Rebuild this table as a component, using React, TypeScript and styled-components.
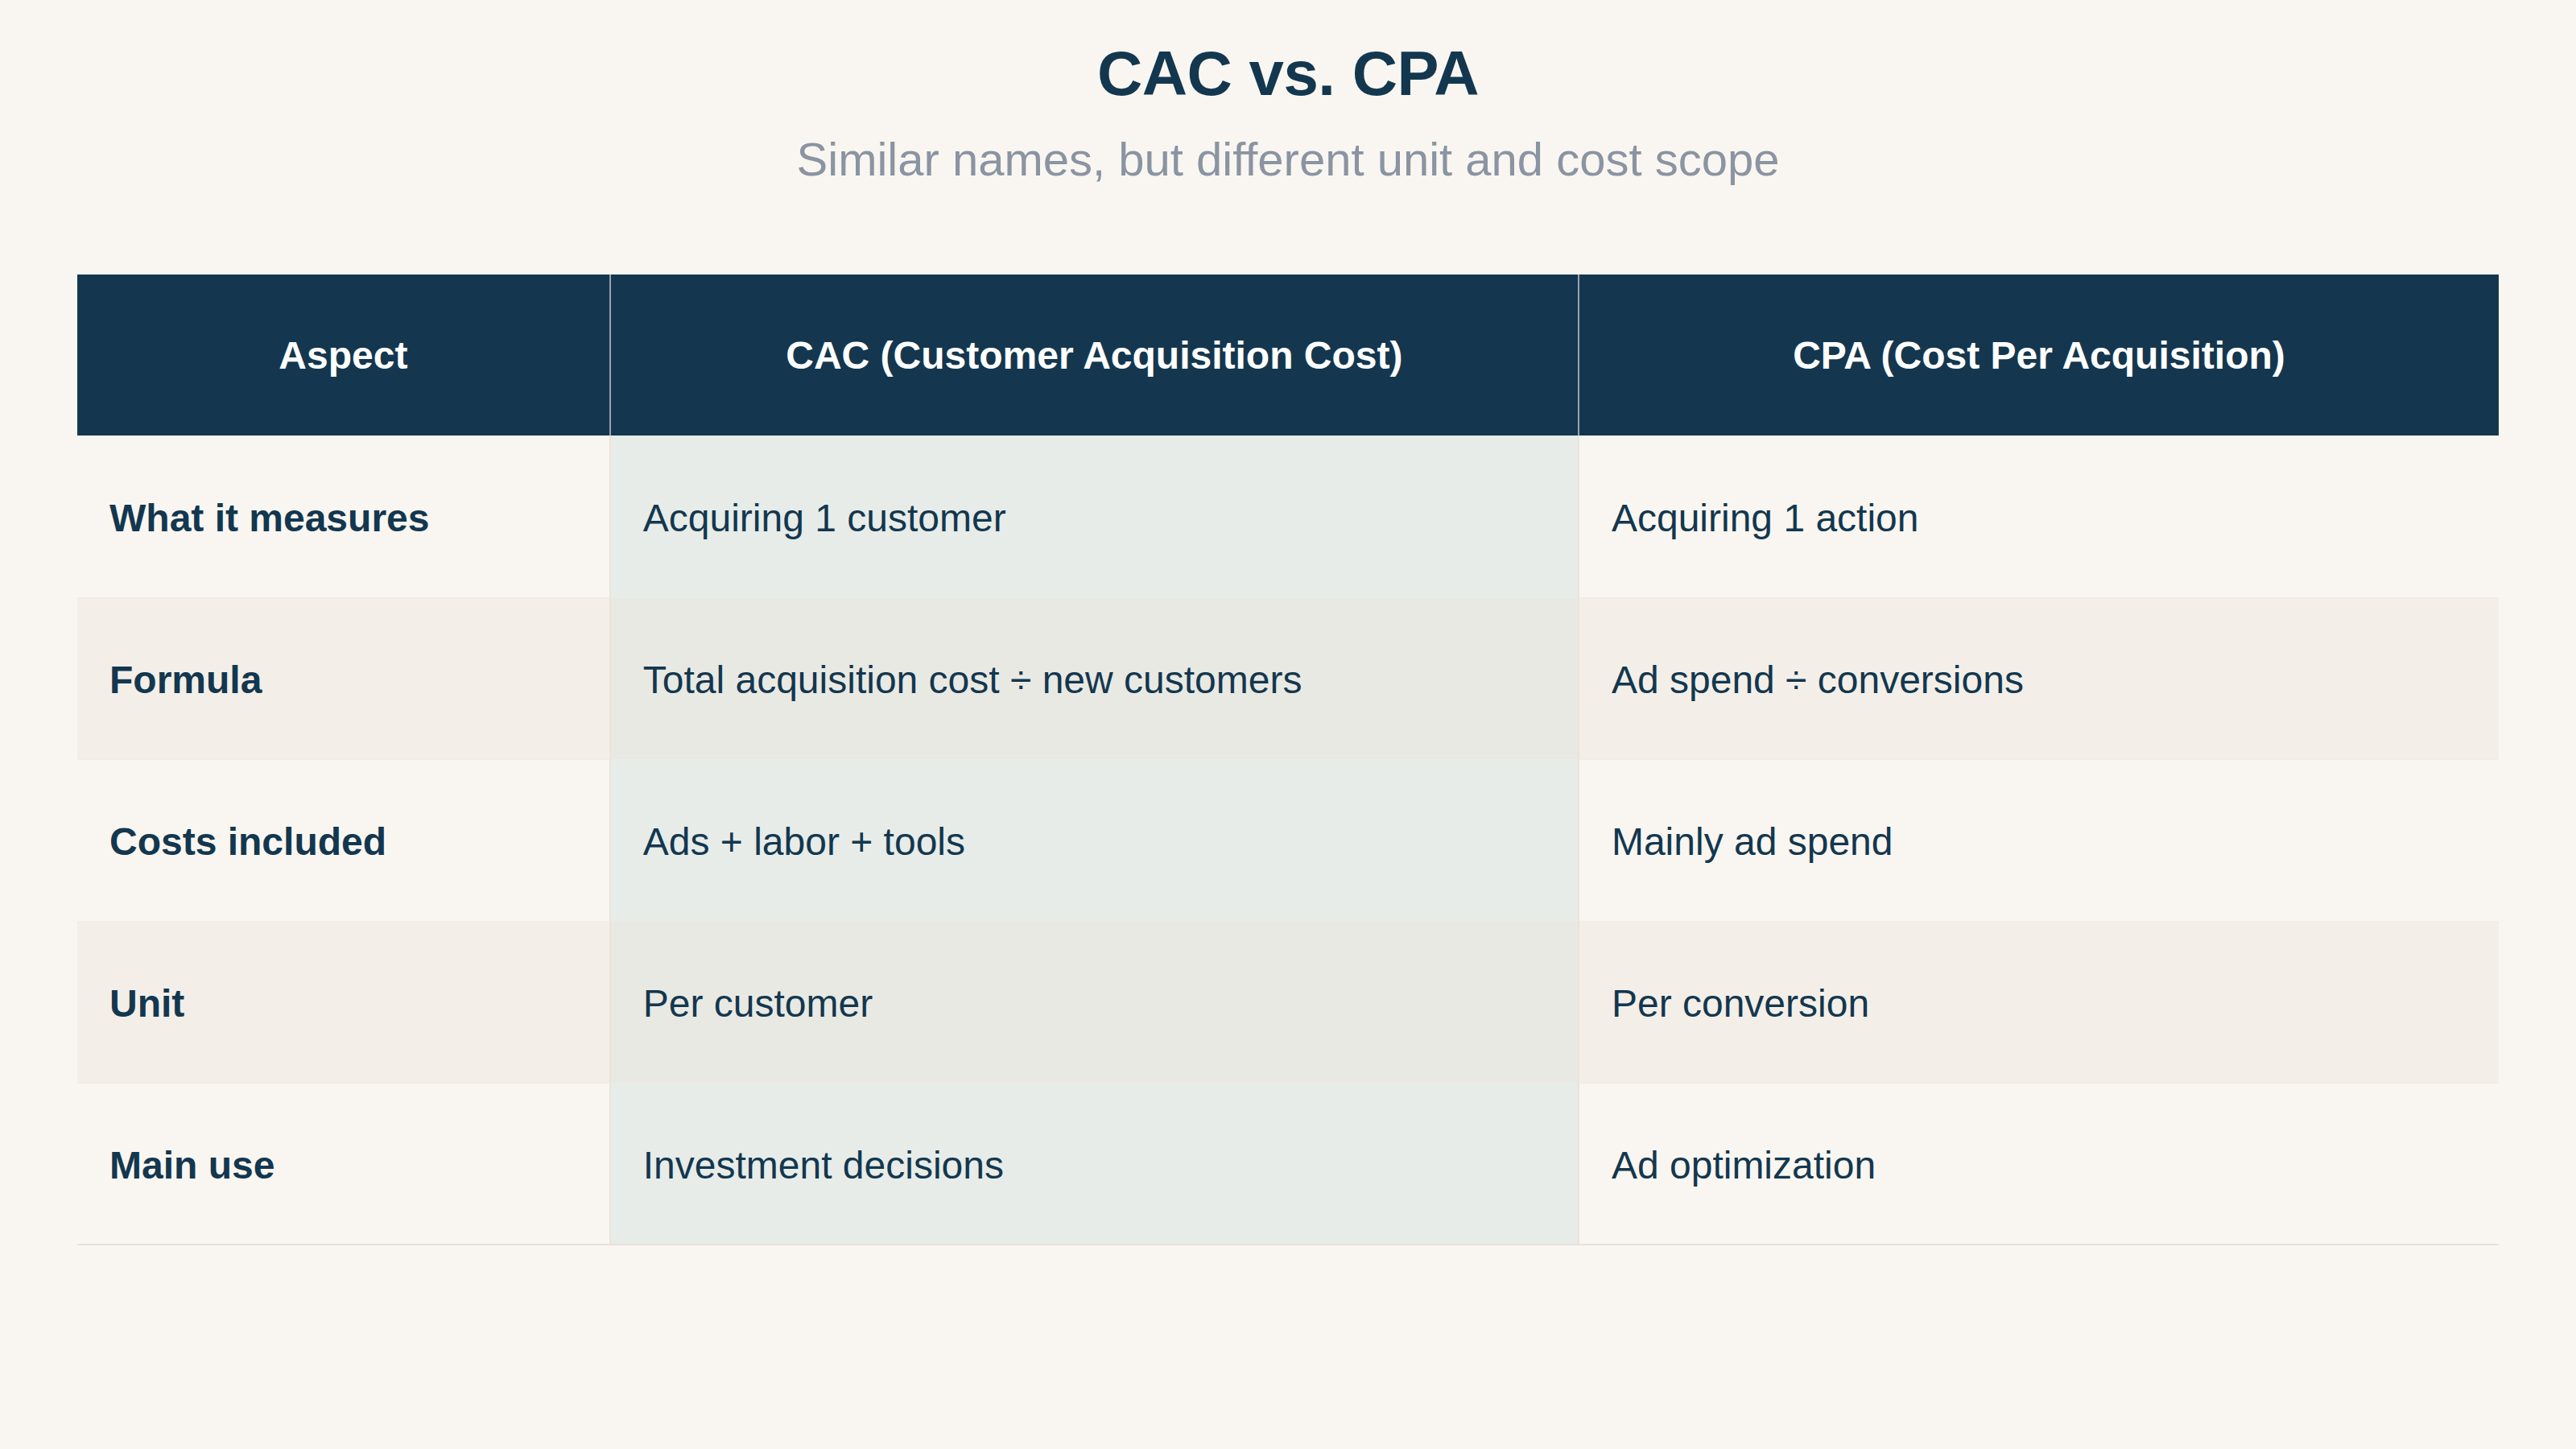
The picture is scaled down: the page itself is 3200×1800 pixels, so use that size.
import React from 'react'
import styled, { createGlobalStyle } from 'styled-components'

/* global */
const GlobalStyle = createGlobalStyle`
    html, body {
        margin: 0;
        padding: 0;
        background: #F9F6F1;
    }

    body {
        font-family: "Liberation Sans", Arial, Helvetica, sans-serif;
        color: #13374F;
    }
`

/* styled elements */
const Page = styled.div`
    width: 3200px;
    min-height: 1800px;
    box-sizing: border-box;
    padding: 45px 96px 0;
    display: flex;
    flex-direction: column;
    align-items: center;
`

const Title = styled.h1`
    margin: 0;
    font-size: 78px;
    line-height: 1.2;
    font-weight: 700;
    letter-spacing: -0.5px;
    color: #13374F;
`

const Subtitle = styled.p`
    margin: 24px 0 0;
    font-size: 58px;
    line-height: 1.2;
    font-weight: 400;
    color: #8A94A2;
`

const Table = styled.table`
    margin-top: 109px;
    width: 100%;
    border-collapse: collapse;
    table-layout: fixed;
`

const HeadCell = styled.th<{ divided?: boolean }>`
    height: 200px;
    padding: 0 40px;
    background: #14374F;
    color: #FFFFFF;
    font-size: 48px;
    font-weight: 700;
    text-align: center;
    vertical-align: middle;
    border-left: ${({ divided }) => divided ? '2px solid rgba(255, 255, 255, 0.55)' : 'none'};
`

const Row = styled.tr<{ alt: boolean; last: boolean }>`
    background: ${({ alt }) => alt ? '#F3EFE8' : '#F9F6F1'};
    border-bottom: ${({ last }) => last ? '2px solid #E6E1DB' : '1px solid #F0EBE3'};
`

const Cell = styled.td<{ variant: 'label' | 'cac' | 'cpa'; alt: boolean }>`
    height: 201px;
    box-sizing: border-box;
    padding: 4px 40px 0;
    font-size: 48px;
    line-height: 1.15;
    vertical-align: middle;
    text-align: left;
    color: #13374F;
    font-weight: ${({ variant }) => variant === 'label' ? 700 : 400};
    border-left: ${({ variant }) => variant === 'label' ? 'none' : '2px solid #E9E3D9'};
    background: ${({ variant, alt }) => variant === 'cac' ? (alt ? '#E9E9E3' : '#E7ECE8') : 'transparent'};
`

const rows = [
    { aspect: 'What it measures', cac: 'Acquiring 1 customer', cpa: 'Acquiring 1 action' },
    { aspect: 'Formula', cac: 'Total acquisition cost ÷ new customers', cpa: 'Ad spend ÷ conversions' },
    { aspect: 'Costs included', cac: 'Ads + labor + tools', cpa: 'Mainly ad spend' },
    { aspect: 'Unit', cac: 'Per customer', cpa: 'Per conversion' },
    { aspect: 'Main use', cac: 'Investment decisions', cpa: 'Ad optimization' },
]

export const App = () => {
    return (
        <>
            <GlobalStyle />
            <Page>
                <Title>CAC vs. CPA</Title>
                <Subtitle>Similar names, but different unit and cost scope</Subtitle>

                <Table>
                    <colgroup>
                        <col style={{ width: '22%' }} />
                        <col style={{ width: '40%' }} />
                        <col style={{ width: '38%' }} />
                    </colgroup>
                    <thead>
                        <tr>
                            <HeadCell>Aspect</HeadCell>
                            <HeadCell divided>CAC (Customer Acquisition Cost)</HeadCell>
                            <HeadCell divided>CPA (Cost Per Acquisition)</HeadCell>
                        </tr>
                    </thead>
                    <tbody>
                        { rows.map((item, index) => {
                            const alt = index % 2 === 1
                            return (
                                <Row alt={alt} last={index === rows.length - 1} key={`row ${index}`}>
                                    <Cell variant="label" alt={alt}>{ item.aspect }</Cell>
                                    <Cell variant="cac" alt={alt}>{ item.cac }</Cell>
                                    <Cell variant="cpa" alt={alt}>{ item.cpa }</Cell>
                                </Row>
                            )
                        }) }
                    </tbody>
                </Table>
            </Page>
        </>
    )
}

export default App
